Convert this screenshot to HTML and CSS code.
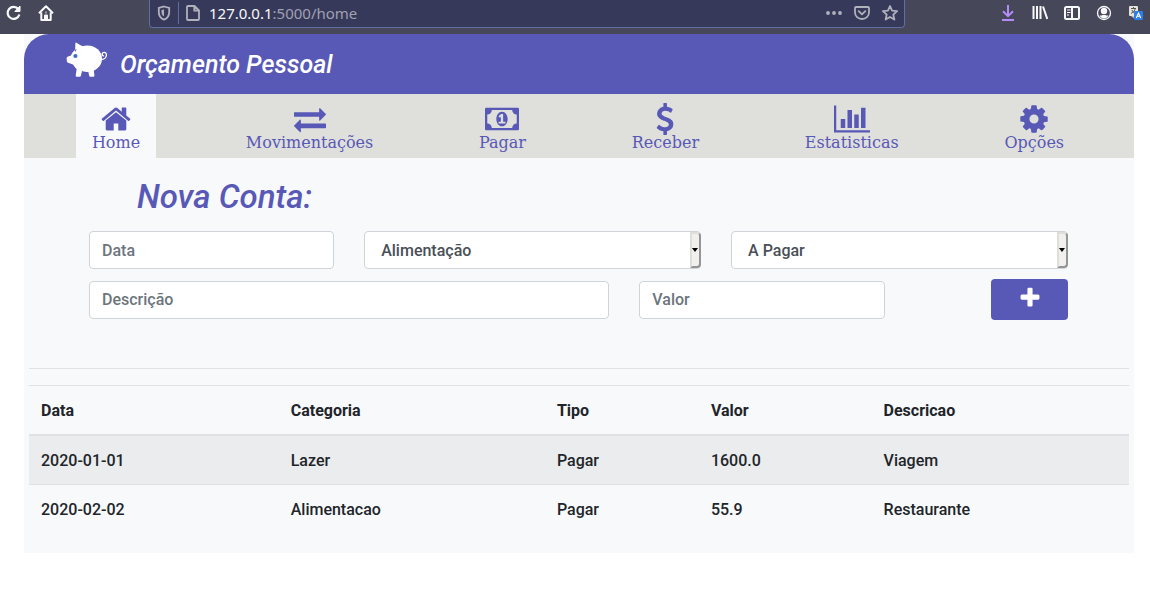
FILE: index.html
```html
<!DOCTYPE html>
<html lang="pt-BR">
<head>
<meta charset="utf-8">
<title>Orçamento Pessoal</title>
<link rel="stylesheet" href="styles.css">
</head>
<body>
<div class="browser-bar">
  <div class="bar-left">
    <button type="button" class="tool" aria-label="Recarregar"><svg width="16" height="16" viewBox="0 0 16 16" fill="none" stroke="currentColor" stroke-width="2.2"><path d="M13.4 9.5A6 6 0 1 1 12.4 4.2"/><path d="M14 1v5.5H8.8z" fill="currentColor" stroke-width="1"/></svg></button>
    <button type="button" class="tool" aria-label="Página inicial"><svg width="16" height="16" viewBox="0 0 16 16" fill="none" stroke="currentColor" stroke-width="2" stroke-linejoin="round"><path d="M1 8.2L8 1.3l7 6.9M3.3 7.5V15h9.4V7.5M7 15v-4.5h2V15M7.5 7.5h1"/></svg></button>
  </div>
  <div class="address">
    <svg width="16" height="16" viewBox="0 0 16 16" fill="none" stroke="currentColor" stroke-width="1.8"><path d="M8 1.500L13.200 3v4c0 4-2 6.500-5.200 7.600C4.800 13.500 2.800 11 2.800 7V3z"/><path d="M8 4.500v7C6.500 10.500 5.500 9 5.500 7V5z" fill="currentColor" stroke="none"/></svg>
    <span class="divider"></span>
    <svg width="16" height="16" viewBox="0 0 16 16" fill="none" stroke="currentColor" stroke-width="1.800" stroke-linejoin="round"><path d="M3 1h6.500L14 5.500V14q0 1-1 1H3q-1 0-1-1V2q0-1 1-1zM9.300 1v4.700H14"/></svg>
    <span class="url"><b>127.0.0.1</b>:5000/home</span>
    <svg width="16" height="16" viewBox="0 0 16 16" fill="currentColor"><circle cx="2" cy="8" r="1.900"/><circle cx="8" cy="8" r="1.900"/><circle cx="14" cy="8" r="1.900"/></svg>
    <svg width="16" height="16" viewBox="0 0 16 16" fill="none" stroke="currentColor" stroke-width="1.800" stroke-linejoin="round" stroke-linecap="round"><path d="M2 2h12q1 0 1 1v4.500a7 6.500 0 0 1-14 0V3q0-1 1-1zM4.700 6.200L8 9.400l3.300-3.200"/></svg>
    <svg width="16" height="16" viewBox="0 0 16 16" fill="none" stroke="currentColor" stroke-width="1.800" stroke-linejoin="round"><path d="M8 1l2.100 4.700 5 .5-3.800 3.400 1.100 5L8 12l-4.400 2.600 1.100-5L.9 6.200l5-.5z"/></svg>
  </div>
  <div class="bar-right">
    <button type="button" class="tool tool-download" aria-label="Downloads"><svg width="16" height="16" viewBox="0 0 16 16" fill="none" stroke="currentColor" stroke-width="2"><path d="M8 0v11M3 6.300L8 11.200l5-4.900M2 15h12"/></svg></button>
    <button type="button" class="tool" aria-label="Biblioteca"><svg width="16" height="16" viewBox="0 0 16 16" fill="none" stroke="currentColor" stroke-width="2"><path d="M1.500 1v13M5 1v13M8.500 1v13M11 1.500L15.300 14"/></svg></button>
    <button type="button" class="tool" aria-label="Barra lateral"><svg width="16" height="16" viewBox="0 0 16 16" fill="none" stroke="currentColor" stroke-width="2"><rect x="1" y="2" width="14" height="12" rx="1.500"/><path d="M8 2v12"/><path d="M3 5h3.500M3 7.500h3.500M3 10h2" stroke-width="1.200"/></svg></button>
    <button type="button" class="tool" aria-label="Conta"><svg width="16" height="16" viewBox="0 0 16 16" fill="currentColor"><circle cx="8" cy="8" r="6.500" fill="none" stroke="currentColor" stroke-width="1.300"/><circle cx="8" cy="6" r="3.200"/><path d="M3.500 10.500q2 .3 3-.5h3q1 .8 3 .5-1.500 3-4.500 3t-4.500-3z"/></svg></button>
    <button type="button" class="tool" aria-label="Traduzir"><svg width="16" height="16" viewBox="0 0 16 16"><rect x="1" y="1" width="9" height="10" rx="1" fill="#e4e4dc"/><path d="M3 3.500h5M5.500 2v1.500M7.500 3.500Q6.500 7 3 8.500M3.800 5Q5 7.500 7.500 8.500" fill="none" stroke="#555" stroke-width="1"/><path d="M3 11h4v3z" fill="#bfc4cf"/><rect x="6" y="6" width="9" height="9" rx="1" fill="#2f7de8"/><path d="M8.300 13l2.200-5 2.200 5M9.200 11.300h2.600" fill="none" stroke="#fff" stroke-width="1.100"/></svg></button>
  </div>
</div>

<div class="page">
  <header class="masthead">
    <svg class="pig" width="42" height="36" viewBox="0 0 42 36" aria-hidden="true">
      <g fill="#fff">
        <ellipse cx="21.500" cy="16.700" rx="14.500" ry="13.300"/>
        <path d="M9.400 1.300Q9.500 0 11 .9q3 2.300 6.500 3.600L9 11zM10.500 7Q6.500 9 5 13.500l-3.500 1.300Q.5 15.200.6 16.500l.3 3q.1 1 1.200 1.300l4.900 1.700Q9 26 12 28z"/>
        <path d="M11 25l-1.300 8.200q-.1 1.500 1.300 1.500h2.600q1.200 0 1.400-1.200l1-4.500zM27.500 26l.9 7.200q.1 1.500-1.300 1.500h-2.600q-1.200 0-1.400-1.200l-.9-4.500z"/>
      </g>
      <path d="M35 17.500q5 0 5.400-4.200.1-3-2.200-3-2 0-2 1.900 0 1.600 1.600 1.800" fill="none" stroke="#fff" stroke-width="1.300"/>
      <circle cx="9.400" cy="14" r="2.100" fill="#3f6fc6"/>
    </svg>
    <span class="brand">Orçamento Pessoal</span>
  </header>

  <nav class="tabs">
    <a class="tab tab-active" href="#home" aria-current="page"><svg width="32" height="32" viewBox="0 0 1792 1792"><path d="M1472 992v480q0 26-19 45t-45 19h-384v-384h-256v384h-384q-26 0-45-19t-19-45v-480q0-1 .5-3t.5-3l575-474 575 474q1 2 1 6zm223-69l-62 74q-8 9-21 11h-3q-13 0-21-7l-692-577-692 577q-12 8-24 7-13-2-21-11l-62-74q-8-10-7-23.500t11-21.500l719-599q32-26 76-26t76 26l244 204v-195q0-14 9-23t23-9h192q14 0 23 9t9 23v408l219 182q10 8 11 21.500t-7 23.500z"/></svg>Home</a>
    <a class="tab" href="#movimentacoes"><svg width="32" height="32" viewBox="0 0 1792 1792"><path d="M1792 1184v192q0 13-9.500 22.500t-22.500 9.500h-1376v192q0 13-9.500 22.500t-22.500 9.500q-12 0-24-10l-319-320q-9-9-9-22 0-14 9-23l320-320q9-9 23-9 13 0 22.500 9.500t9.500 22.500v192h1376q13 0 22.500 9.500t9.500 22.500zm0-544q0 14-9 23l-320 320q-9 9-23 9-13 0-22.500-9.500t-9.500-22.500v-192h-1376q-13 0-22.500-9.500t-9.500-22.500v-192q0-13 9.500-22.500t22.500-9.500h1376v-192q0-14 9-23t23-9q12 0 24 10l319 319q9 9 9 23z"/></svg>Movimentações</a>
    <a class="tab" href="#pagar"><svg width="34" height="32" viewBox="0 0 1920 1792"><path fill-rule="evenodd" d="M64 256h1792q64 0 64 64v1152q0 64-64 64H64q-64 0-64-64V320q0-64 64-64zM384 384q0 106-75 181t-181 75v512q106 0 181 75t75 181h1152q0-106 75-181t181-75V640q-106 0-181-75t-75-181zM960 480c190 0 320 190 320 416s-130 416-320 416-320-190-320-416 130-416 320-416zM768 1152h384v-96h-128V608H910L762 745l77 80q42-37 55-57h2v288H768z"/></svg>Pagar</a>
    <a class="tab" href="#receber"><svg width="32" height="32" viewBox="0 0 1792 1792"><path d="M1362 1185q0 153-99.500 263.500t-258.500 136.500v175q0 14-9 23t-23 9h-135q-13 0-22.500-9.500t-9.500-22.500v-175q-66-9-127.500-31t-101.500-44.500-74-48-46.500-37.500-17.500-18q-17-21-2-41l103-135q7-10 23-12 15-2 24 9l2 2q113 99 243 125 37 8 74 8 81 0 142.500-43t61.500-122q0-28-15-53t-33.500-42-58.500-37.500-66-32-80-32.500q-39-16-61.500-25t-61.500-26.500-62.500-31-56.500-35.500-53.500-42.500-43.500-49-35.500-58-21-66.500-8.500-78q0-138 98-242t255-134v-180q0-13 9.500-22.500t22.500-9.500h135q14 0 23 9t9 23v176q57 6 110.500 23t87 33.500 63.500 37.500 39 29 15 14q17 18 5 38l-81 146q-8 15-23 16-14 3-27-7-3-3-14.500-12t-39-26.500-58.500-32-74.500-26-85.500-11.500q-95 0-155 43t-60 111q0 26 8.500 48t29.500 41.500 39.500 33 56 31 60.500 27 70 27.500q53 20 81 31.500t76 35 75.500 42.500 62 50 53 63.500 31.500 76.500 13 94z"/></svg>Receber</a>
    <a class="tab" href="#estatisticas"><svg width="36" height="32" viewBox="0 0 2048 1792"><path d="M640 896v512h-256v-512h256zm384-512v1024h-256v-1024h256zm1024 1152v128h-2048v-1536h128v1408h1920zm-640-896v768h-256v-768h256zm384-384v1152h-256v-1152h256z"/></svg>Estatisticas</a>
    <a class="tab" href="#opcoes"><svg width="32" height="32" viewBox="0 0 1792 1792"><path d="M1152 896q0-106-75-181t-181-75-181 75-75 181 75 181 181 75 181-75 75-181zm512-109v222q0 12-8 23t-20 13l-185 28q-19 54-39 91 35 50 107 138 10 12 10 25t-9 23q-27 37-99 108t-94 71q-12 0-26-9l-138-108q-44 23-91 38-16 136-29 186-7 28-36 28h-222q-14 0-24.500-8.500t-11.500-21.500l-28-184q-49-16-90-37l-141 107q-10 9-25 9-14 0-25-11-126-114-165-168-7-10-7-23 0-12 8-23 15-21 51-66.500t54-70.500q-27-50-41-99l-183-27q-13-2-21-12.500t-8-23.500v-222q0-12 8-23t19-13l186-28q14-46 39-92-40-57-107-138-10-12-10-24 0-10 9-23 26-36 98.500-107.500t94.500-71.500q13 0 26 10l138 107q44-23 91-38 16-136 29-186 7-28 36-28h222q14 0 24.500 8.500t11.500 21.500l28 184q49 16 90 37l142-107q9-9 24-9 13 0 25 10 129 119 165 170 7 8 7 22 0 12-8 23-15 21-51 66.500t-54 70.500q26 50 41 98l183 28q13 2 21 12.500t8 23.500z"/></svg>Opções</a>
  </nav>

  <main class="content">
    <h1 class="title">Nova Conta:</h1>
    <form class="entry">
      <input class="field span-3" type="text" placeholder="Data" aria-label="Data">
      <span class="picker span-4">
        <select class="field" aria-label="Categoria"><option>Alimentação</option><option>Lazer</option></select>
      </span>
      <span class="picker span-4">
        <select class="field" aria-label="Tipo"><option>A Pagar</option><option>A Receber</option></select>
      </span>
      <input class="field span-6" type="text" placeholder="Descrição" aria-label="Descrição">
      <input class="field span-3" type="text" placeholder="Valor" aria-label="Valor">
      <button class="add span-2" type="button" aria-label="Adicionar"><svg width="24" height="24" viewBox="0 0 1792 1792"><path d="M1600 736v192q0 40-28 68t-68 28h-416v416q0 40-28 68t-68 28h-192q-40 0-68-28t-28-68v-416h-416q-40 0-68-28t-28-68v-192q0-40 28-68t68-28h416v-416q0-40 28-68t68-28h192q40 0 68 28t28 68v416h416q40 0 68 28t28 68z"/></svg></button>
    </form>
    <hr class="rule">
    <table class="accounts">
      <colgroup><col class="c-date"><col class="c-category"><col class="c-type"><col class="c-value"><col></colgroup>
      <thead>
        <tr><th scope="col">Data</th><th scope="col">Categoria</th><th scope="col">Tipo</th><th scope="col">Valor</th><th scope="col">Descricao</th></tr>
      </thead>
      <tbody>
        <tr><td>2020-01-01</td><td>Lazer</td><td>Pagar</td><td>1600.0</td><td>Viagem</td></tr>
        <tr><td>2020-02-02</td><td>Alimentacao</td><td>Pagar</td><td>55.9</td><td>Restaurante</td></tr>
      </tbody>
    </table>
  </main>
</div>
</body>
</html>
```

FILE: styles.css
```css
*, *::before, *::after { box-sizing: border-box; }

body {
  margin: 0;
  background: #fff;
  color: #212529;
  font: 500 16px/24px Roboto, sans-serif;
}

svg { display: block; flex: none; }

/* Browser toolbar */
.browser-bar {
  display: flex;
  align-items: flex-start;
  height: 34px;
  background: #464759;
  color: #f9f9fa;
}
.bar-left, .bar-right { display: flex; gap: 16px; padding-top: 5px; }
.bar-left { width: 149px; padding-left: 6px; }
.bar-right { margin-left: auto; padding-right: 6px; }
.tool {
  width: 16px;
  padding: 0;
  border: 0;
  background: none;
  color: inherit;
}
.tool-download { color: #b48cf7; }
.address {
  display: flex;
  flex: 1;
  align-items: center;
  gap: 12px;
  height: 28px;
  max-width: 756px;
  padding: 0 6px 1px;
  border: 1px solid #5f6ea3;
  border-top: 0;
  border-radius: 0 0 4px 4px;
  background: #363959;
  color: #b1b1bd;
}
.divider { width: 1px; height: 22px; margin: 0 -6px; background: #5f6ea3; }
.url {
  flex: 1;
  margin-left: -4px;
  color: #a0a1b2;
  font: 400 15px/24px "Noto Sans", sans-serif;
}
.url b { color: #f9f9fa; font-weight: 400; }

/* Page */
.page { margin: 0 16px 0 24px; background: #f8f9fb; }
.masthead {
  display: flex;
  gap: 12px;
  height: 60px;
  padding: 8px 42px;
  border-radius: 25px 25px 0 0;
  background: #5858b7;
}
.brand {
  padding-top: 9px;
  color: #fff;
  font-size: 25px;
  font-style: italic;
  line-height: 28px;
}

.tabs {
  display: flex;
  justify-content: space-around;
  padding: 0 17px 0 15px;
  background: #dfdfdb;
}
.tab {
  display: flex;
  flex-direction: column;
  align-items: center;
  padding: 9px 16px 7px;
  color: #5858b7;
  fill: currentColor;
  font: 400 16px/16px "DejaVu Serif", serif;
  text-decoration: none;
}
.tab-active { background: #f8f9fb; }

.content { padding: 19px 5px 20px; }
.title {
  margin: 0 0 14px;
  padding-left: 108px;
  color: #5858b7;
  font-size: 33px;
  font-style: italic;
  font-weight: 500;
  line-height: 40px;
}

/* New account form */
.entry {
  display: grid;
  grid-template-columns: repeat(11, minmax(0, 1fr));
  align-items: center;
  gap: 10px 30px;
  padding: 0 61px 0 60px;
}
.span-2 { grid-column: span 2; }
.span-3 { grid-column: span 3; }
.span-4 { grid-column: span 4; }
.span-6 { grid-column: span 6; }
.field {
  width: 100%;
  height: 38px;
  padding: 6px 12px;
  border: 1px solid #ced4da;
  border-radius: 4px;
  background: #fff;
  color: #495057;
  font: inherit;
}
.field::placeholder { color: #6c757d; opacity: 1; }
.picker { position: relative; }
.picker .field { display: block; padding: 7px 16px 5px; appearance: none; }
.picker::before {
  content: "";
  position: absolute;
  top: 1px;
  right: 0;
  bottom: 1px;
  width: 11px;
  border: 2px solid #dededc;
  border-right-color: #959595;
  border-bottom-color: #959595;
  border-radius: 0 4px 4px 0;
  background: #f1f0ee;
  pointer-events: none;
}
.picker::after {
  content: "";
  position: absolute;
  top: 17px;
  right: 3px;
  border: 3px solid transparent;
  border-top: 4px solid #000;
  border-bottom: 0;
  pointer-events: none;
}
.add {
  display: flex;
  align-items: flex-start;
  justify-content: center;
  justify-self: end;
  width: 77px;
  height: 41px;
  padding: 7px 0;
  border: 0;
  border-radius: 4px;
  background: #5858b7;
  fill: #fff;
}

.rule { margin: 48px 0 16px; border: 0; border-top: 1px solid #dee2e6; }

/* Accounts table */
.accounts { width: 100%; border-collapse: collapse; table-layout: fixed; }
.c-date { width: 22.7%; }
.c-category { width: 24.2%; }
.c-type { width: 14%; }
.c-value { width: 15.7%; }
.accounts th, .accounts td {
  padding: 13px 12px 11px;
  border-top: 1px solid #dee2e6;
  text-align: left;
}
.accounts th { border-bottom: 2px solid #dee2e6; font-weight: 700; }
.accounts tbody tr:nth-child(odd) { background: #ebecee; }
```
